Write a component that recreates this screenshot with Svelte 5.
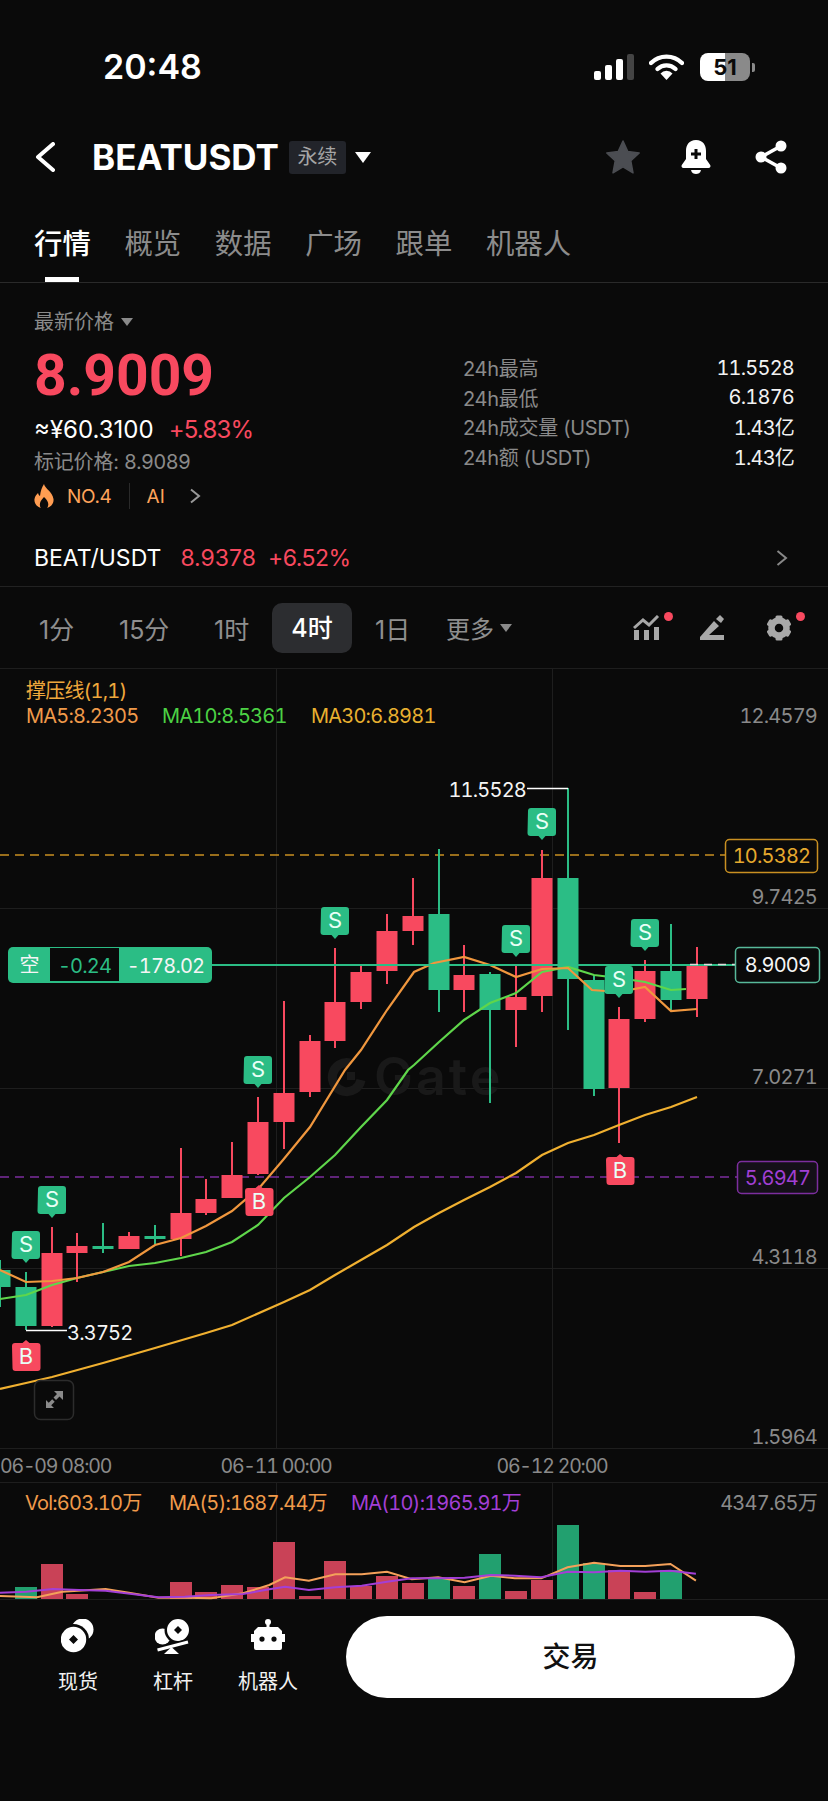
<script>
  const RED = '#f8495f';
  const GREEN = '#2bbd85';
  // x, bodyTop, bodyBottom, wickTop, wickBottom, up?
  const candles = [
    [0,1270,1287,1260,1307,0],[26,1287,1326,1272,1330,0],[52,1253,1326,1227,1327,1],[77,1246,1253,1233,1282,1],
    [103,1246,1249,1223,1253,0],[129,1236,1249,1232,1249,1],[155,1236,1239,1225,1244,0],[181,1213,1239,1148,1256,1],
    [206,1199,1213,1179,1215,1],[232,1175,1198,1142,1198,1],[258,1122,1174,1097,1175,1],[284,1093,1122,1001,1149,1],
    [310,1041,1092,1035,1097,1],[335,1002,1041,948,1048,1],[361,972,1002,965,1009,1],[387,931,971,914,984,1],
    [413,916,931,878,945,1],[439,914,990,849,1012,0],[464,975,990,945,1012,1],[490,974,1010,972,1103,0],
    [516,997,1010,965,1047,1],[542,878,996,850,1012,1],[568,878,979,788,1030,0],[594,980,1089,975,1096,0],
    [619,1019,1088,1007,1143,1],[645,971,1019,960,1022,1],[671,971,1000,924,1010,0],[697,966,999,947,1017,1]
  ].map(([x, t, b, wt, wb, up]) => ({ x, t, b, wt, wb, color: up ? RED : GREEN }));

  const pts = (a) => a.map((p) => p.join(',')).join(' ');
  const ma5 = pts([[0,1270],[26,1282],[52,1281],[77,1278],[103,1272],[129,1262],[155,1245],[181,1238],[206,1226],[232,1211],[260,1187],[283,1160],[310,1127],[345,1070],[361,1050],[387,1010],[414,972],[434,963],[464,957],[490,965],[516,977],[542,969],[568,968],[592,990],[619,992],[645,987],[671,1011],[697,1009]]);
  const ma10 = pts([[0,1299],[26,1295],[52,1285],[77,1278],[103,1272],[129,1266],[155,1263],[181,1258],[206,1252],[232,1242],[258,1225],[284,1198],[310,1177],[335,1155],[361,1127],[387,1100],[408,1070],[414,1065],[439,1042],[464,1020],[490,1003],[516,993],[542,972],[568,967],[594,975],[619,978],[645,982],[671,990],[686,989]]);
  const ma30 = pts([[0,1389],[26,1383],[52,1377],[103,1363],[155,1348],[206,1333],[232,1325],[284,1302],[310,1290],[335,1275],[361,1260],[387,1245],[414,1227],[439,1213],[464,1200],[490,1187],[516,1173],[542,1155],[568,1143],[594,1135],[619,1125],[645,1115],[671,1107],[697,1097]]);

  const vols = [[26,1587,0],[52,1564,1],[77,1594,1],[181,1582,1],[206,1592,1],[232,1585,1],[258,1587,1],[284,1542,1],[310,1596,1],[335,1561,1],[361,1586,1],[387,1576,1],[413,1583,1],[439,1578,0],[464,1586,1],[490,1554,0],[516,1591,1],[542,1580,1],[568,1525,0],[594,1563,0],[619,1570,1],[645,1592,1],[671,1570,0]];
  const zoomPts = (a) => a.map(([u, v]) => `${(u / 1.894).toFixed(1)},${(1470 + v / 3).toFixed(1)}`).join(' ');
  const volOrange = zoomPts([[0,378],[70,382],[118,365],[200,357],[250,370],[300,383],[350,383],[400,385],[460,370],[510,345],[540,322],[585,332],[635,313],[685,313],[733,305],[780,328],[830,322],[880,337],[930,317],[975,325],[1025,325],[1075,292],[1125,278],[1175,288],[1222,288],[1270,282],[1318,332]]);
  const volPurple = zoomPts([[0,368],[50,365],[100,357],[150,360],[200,362],[250,372],[300,382],[350,380],[400,375],[460,372],[510,358],[540,350],[585,360],[635,352],[685,347],[733,335],[780,325],[830,325],[880,323],[930,315],[975,317],[1025,322],[1075,305],[1125,307],[1175,302],[1222,305],[1270,302],[1318,311]]);

  const sells = [[335,907],[258,1056],[542,808],[516,925],[645,919],[619,966],[52,1186],[26,1231]];
  const buys = [[26,1343],[259,1188],[620,1157]];
  const axis = [['12.4579',716],['9.7425',897],['7.0271',1077],['4.3118',1257],['1.5964',1437]];
  const tabs = ['行情','概览','数据','广场','跟单','机器人'];
  const stats = [['24h最高','11.5528'],['24h最低','6.1876'],['24h成交量 (USDT)','1.43亿'],['24h额 (USDT)','1.43亿']];
  const periods = ['1分','15分','1时','4时','1日'];
  const teeth = [0, 60, 120, 180, 240, 300];
</script>

<div class="page">
  <div class="status">
    <span class="clock">20:48</span>
    <div class="status-icons">
      <svg width="40" height="26" viewBox="0 0 40 26">
        <rect x="0" y="17" width="7" height="9" rx="2" fill="#fff"/>
        <rect x="11" y="11" width="7" height="15" rx="2" fill="#fff"/>
        <rect x="22" y="5" width="7" height="21" rx="2" fill="#fff"/>
        <rect x="33" y="0" width="7" height="26" rx="2" fill="#444"/>
      </svg>
      <svg width="35" height="26" viewBox="0 0 35 26">
        <path d="M2 9 A22 22 0 0 1 33 9" fill="none" stroke="#fff" stroke-width="4.4" stroke-linecap="round"/>
        <path d="M8.5 15 A13 13 0 0 1 26.5 15" fill="none" stroke="#fff" stroke-width="4.4" stroke-linecap="round"/>
        <path d="M11.5 19.5 L17.5 26 L23.5 19.5 A8 8 0 0 0 11.5 19.5 Z" fill="#fff"/>
      </svg>
      <div class="battery"><span>51</span></div>
      <div class="battery-cap"></div>
    </div>
  </div>

  <div class="nav">
    <svg class="back" width="20" height="30" viewBox="0 0 20 30"><path d="M18 2 L3 15 L18 28" fill="none" stroke="#fff" stroke-width="4" stroke-linecap="round" stroke-linejoin="round"/></svg>
    <span class="symbol">BEATUSDT</span>
    <span class="tag">永续</span>
    <span class="caret white"></span>
    <div class="nav-icons">
      <svg width="34" height="34" viewBox="0 0 34 34"><path d="M17 1 L21.8 11.6 L33.2 13 L24.8 20.8 L27 32.8 L17 26.8 L7 32.8 L9.2 20.8 L0.8 13 L12.2 11.6 Z" fill="#4b4d52" stroke="#4b4d52" stroke-width="1.5" stroke-linejoin="round"/></svg>
      <svg width="30" height="34" viewBox="0 0 30 34"><path d="M15 0 C8 0 5 5 5 11 L5 19 L0.8 25 C0 26.5 .8 28 2.5 28 L27.5 28 C29.2 28 30 26.5 29.2 25 L25 19 L25 11 C25 5 22 0 15 0 Z" fill="#fff"/><path d="M10 30 L20 30 C19.5 33 17 34 15 34 C13 34 10.5 33 10 30 Z" fill="#fff"/><path d="M15 9 V19 M10 14 H20" stroke="#0a0a0a" stroke-width="3"/></svg>
      <svg width="32" height="34" viewBox="0 0 32 34"><path d="M26 6 L6 17 L26 28" fill="none" stroke="#fff" stroke-width="3.6"/><circle cx="26" cy="6" r="5.5" fill="#fff"/><circle cx="6" cy="17" r="5.5" fill="#fff"/><circle cx="26" cy="28" r="5.5" fill="#fff"/></svg>
    </div>
  </div>

  <div class="tabs">
    {#each tabs as t, i}
      <span class="tab" class:active={i === 0}>{t}</span>
    {/each}
  </div>

  <div class="summary">
    <div class="left">
      <div class="latest">最新价格 <span class="caret gray small"></span></div>
      <div class="price">8.9009</div>
      <div class="fiat"><span>≈¥60.3100</span><span class="red change">+5.83%</span></div>
      <div class="mark">标记价格: 8.9089</div>
      <div class="rank">
        <svg width="20" height="24" viewBox="0 0 20 24"><path d="M10 0 C11 4.500 18.500 8 19.500 15 C20.200 20 16 23.500 13.200 24 C15 21 15 17.500 10 13 C5.500 17.500 5 21 6.800 24 C4 23.500 -0.200 20 0.500 15 C1 12 2.500 10.500 4 9 C4.500 10.500 5 11.500 6 12 C6.500 7 8 3 10 0 Z" fill="#ff9d52"/></svg>
        <span class="no">NO.4</span><i></i><span class="ai">AI</span>
        <svg class="mini-chev" width="12" height="16" viewBox="0 0 12 16"><path d="M2 1.500 L10 8 L2 14.500" fill="none" stroke="#999" stroke-width="2"/></svg>
      </div>
    </div>
    <div class="right">
      {#each stats as [k, v]}
        <div class="stat"><span>{k}</span><b>{v}</b></div>
      {/each}
    </div>
  </div>

  <div class="spot">
    <span class="pair">BEAT/USDT</span>
    <span class="red last">8.9378</span>
    <span class="red pct">+6.52%</span>
    <svg class="spot-chev" width="12" height="16" viewBox="0 0 12 16"><path d="M1.500 1 L10 8 L1.500 15" fill="none" stroke="#888" stroke-width="2"/></svg>
  </div>

  <div class="periods">
    {#each periods as p, i}
      <span class="period p{i}" class:on={i === 3}>{p}</span>
    {/each}
    <span class="more">更多</span>
    <span class="caret gray small"></span>
    <div class="tools">
      <div class="tool">
        <svg width="27" height="25" viewBox="0 0 27 25"><path d="M1 13 L10 5 L16 10 L25 1" fill="none" stroke="#a8a8a8" stroke-width="3"/><rect x="1" y="15" width="5" height="10" fill="#a8a8a8"/><rect x="11" y="15" width="5" height="10" fill="#a8a8a8"/><rect x="21" y="12" width="5" height="13" fill="#a8a8a8"/></svg>
        <b></b>
      </div>
      <div class="tool">
        <svg width="25" height="25" viewBox="0 0 25 25"><path d="M0 22 L14 6 L19 11 L9 20 H24 V25 H0 Z M16 4 L20 0 L24 4 L21 8 Z" fill="#a8a8a8"/></svg>
      </div>
      <div class="tool">
        <svg width="24" height="26" viewBox="0 0 24 26">
          <circle cx="12" cy="13" r="7.500" fill="none" stroke="#a8a8a8" stroke-width="6.500"/>
          {#each teeth as a}
            <rect x="8.500" y="0.500" width="7" height="5" rx="1.500" fill="#a8a8a8" transform="rotate({a} 12 13)"/>
          {/each}
        </svg>
        <b class="gear"></b>
      </div>
    </div>
  </div>

  <svg class="chart" width="828" height="932" viewBox="0 668 828 932">
    <!-- grid -->
    {#each [668, 908, 1088, 1268, 1448, 1482, 1599] as y}
      <line x1="0" x2="828" y1={y + .5} y2={y + .5} stroke="#1e1e1e"/>
    {/each}
    {#each [276, 552] as x}
      <line x1={x + .5} x2={x + .5} y1="668" y2="1448" stroke="#1e1e1e"/>
      <line x1={x + .5} x2={x + .5} y1="1482" y2="1599" stroke="#1e1e1e"/>
    {/each}

    <!-- watermark -->
    <path d="M350 1063 A14.500 14.500 0 1 0 361 1080" fill="none" stroke="#191919" stroke-width="9"/>
    <rect x="347" y="1072" width="8" height="8" fill="#191919"/>
    <text class="watermark" x="374" y="1095">Gate</text>

    <!-- alert lines -->
    <line x1="0" x2="725" y1="855" y2="855" stroke="#c99022" stroke-width="1.500" stroke-dasharray="9 6"/>
    <line x1="0" x2="737" y1="1177" y2="1177" stroke="#7c2e9e" stroke-width="1.500" stroke-dasharray="9 6"/>

    <!-- candles -->
    {#each candles as c}
      <rect x={c.x - 1} y={c.wt} width="2" height={c.wb - c.wt} fill={c.color}/>
      <rect x={c.x - 10.500} y={c.t} width="21" height={c.b - c.t} fill={c.color}/>
    {/each}

    <!-- moving averages -->
    <polyline points={ma30} fill="none" stroke="#f0b030" stroke-width="2.200"/>
    <polyline points={ma10} fill="none" stroke="#5fd64b" stroke-width="2.200"/>
    <polyline points={ma5} fill="none" stroke="#f0973e" stroke-width="2.200"/>

    <!-- open position -->
    <line x1="212" x2="736" y1="965" y2="965" stroke={GREEN} stroke-width="2"/>
    <line x1="690" x2="735" y1="964.500" y2="964.500" stroke="#ddd" stroke-width="1.500" stroke-dasharray="8 6"/>
    <rect x="8" y="947" width="204" height="36" rx="5" fill={GREEN}/>
    <rect x="50" y="948" width="69" height="33" fill="#0a0a0a"/>
    <text class="t w cjk" x="29" y="972" text-anchor="middle">空</text>
    <text class="t" x="84.500" y="973" text-anchor="middle" fill={GREEN}>-0.24</text>
    <text class="t w" x="165.500" y="973" text-anchor="middle">-178.02</text>

    <!-- high / low -->
    <path d="M527 788.500 H568" stroke="#fff" stroke-width="1.500" fill="none"/>
    <text class="t w" x="526" y="796.500" text-anchor="end">11.5528</text>
    <path d="M26 1330.500 H67" stroke="#fff" stroke-width="1.500" fill="none"/>
    <text class="t w" x="67" y="1339.500">3.3752</text>

    <!-- markers -->
    {#each sells as [x, y]}
      <path d="M{x - 14} {y + 3} a3 3 0 0 1 3 -3 h22 a3 3 0 0 1 3 3 v22 a3 3 0 0 1 -3 3 h-7.500 l-3.500 4 l-3.500 -4 h-8 a3 3 0 0 1 -3 -3 Z" fill={GREEN}/>
      <text class="t marker" x={x} y={y + 21} text-anchor="middle">S</text>
    {/each}
    {#each buys as [x, y]}
      <path d="M{x - 14} {y + 3} a3 3 0 0 1 3 -3 h7.500 l3.500 -3 l3.500 3 h8 a3 3 0 0 1 3 3 v22 a3 3 0 0 1 -3 3 h-22 a3 3 0 0 1 -3 -3 Z" fill={RED}/>
      <text class="t marker" x={x} y={y + 21} text-anchor="middle">B</text>
    {/each}

    <!-- legends -->
    <text class="t cjk" x="26" y="698" fill="#efa83c">撑压线(1,1)</text>
    <text class="t" x="26" y="723" fill="#f09a4a">MA5:8.2305</text>
    <text class="t" x="162" y="723" fill="#4cd244">MA10:8.5361</text>
    <text class="t" x="311" y="723" fill="#e8b030">MA30:6.8981</text>

    <!-- axis -->
    {#each axis as [v, y]}
      <text class="t g" x="817" y={y + 7} text-anchor="end">{v}</text>
    {/each}
    <rect x="725.500" y="839.500" width="92" height="33" rx="4" fill="#0a0a0a" stroke="#c99022" stroke-width="1.500"/>
    <text class="t" x="771.500" y="863" text-anchor="middle" fill="#e6a92e">10.5382</text>
    <rect x="737.500" y="1161.500" width="80" height="32" rx="4" fill="#141018" stroke="#7c2e9e" stroke-width="1.500"/>
    <text class="t" x="777.500" y="1184.500" text-anchor="middle" fill="#a13fd4">5.6947</text>
    <rect x="735.500" y="947.500" width="84" height="35" rx="4" fill="#0a0a0a" stroke="#57b99a" stroke-width="1.500"/>
    <text class="t w" x="777.500" y="972" text-anchor="middle">8.9009</text>

    <!-- fullscreen -->
    <rect x="34.500" y="1380.500" width="39" height="39" rx="6" fill="#0a0a0a" stroke="#2c2c2c" stroke-width="1.500"/>
    <path d="M46 1408 h8 l-2.800 -2.800 l3.500 -3.500 l-2.500 -2.500 l-3.500 3.500 l-2.700 -2.700 Z M63 1391 h-9 l3 3 l-3.500 3.500 l2.500 2.500 l3.500 -3.500 l3.500 3.500 Z" fill="#8a8a8a"/>

    <!-- time axis -->
    <text class="t g time" x="0" y="1473">06-09 08:00</text>
    <text class="t g time" x="276" y="1473" text-anchor="middle">06-11 00:00</text>
    <text class="t g time" x="552" y="1473" text-anchor="middle">06-12 20:00</text>

    <!-- volume -->
    {#each vols as [x, y, up]}
      <rect x={x - 11} y={y} width="22" height={1599 - y} fill={up ? '#c94257' : '#22a06f'}/>
    {/each}
    <polyline points={volOrange} fill="none" stroke="#f4a15a" stroke-width="2"/>
    <polyline points={volPurple} fill="none" stroke="#a33fd6" stroke-width="2"/>
    <text class="t cjk" x="25" y="1510" fill="#f09a4a">Vol:603.10万</text>
    <text class="t cjk" x="169" y="1510" fill="#f09a4a">MA(5):1687.44万</text>
    <text class="t cjk" x="351" y="1510" fill="#a33fd6">MA(10):1965.91万</text>
    <text class="t g cjk" x="817" y="1510" text-anchor="end">4347.65万</text>
  </svg>

  <div class="bottom">
    <div class="shortcut s1">
      <svg width="34" height="35" viewBox="0 0 34 35">
        <circle cx="21.500" cy="10.500" r="11" fill="#fff"/>
        <circle cx="12.500" cy="20.500" r="15.500" fill="#0a0a0a"/>
        <path fill-rule="evenodd" d="M12.500 7.800 A12.700 12.700 0 1 0 12.500 33.200 A12.700 12.700 0 1 0 12.500 7.800 Z M12.500 16 L17 20.500 L12.500 25 L8 20.500 Z" fill="#fff"/>
      </svg>
      <span>现货</span>
    </div>
    <div class="shortcut s2">
      <svg width="36" height="35" viewBox="0 0 36 35">
        <circle cx="7.500" cy="17.500" r="8" fill="#fff"/>
        <circle cx="23" cy="11" r="13.500" fill="#0a0a0a"/>
        <path fill-rule="evenodd" d="M23 0 A11 11 0 1 0 23 22 A11 11 0 1 0 23 0 Z M23 7 L27 11 L23 15 L19 11 Z" fill="#fff"/>
        <path d="M2.500 31 L33 23" stroke="#0a0a0a" stroke-width="6"/>
        <path d="M2.500 31 L33 23" stroke="#fff" stroke-width="3"/>
        <path d="M16.500 28 L9 35 H24 Z" fill="#fff"/>
      </svg>
      <span>杠杆</span>
    </div>
    <div class="shortcut s3">
      <svg width="34" height="35" viewBox="0 0 34 35">
        <circle cx="17" cy="3" r="3" fill="#fff"/>
        <rect x="15.500" y="4" width="3" height="5" fill="#fff"/>
        <path fill-rule="evenodd" d="M7 8 H27 L31 12 V15 H34 V23 H31 V29 Q31 31 29 31 H5 Q3 31 3 29 V23 H0 V15 H3 V12 Z M11 17.500 A2.600 2.600 0 1 0 11 22.700 A2.600 2.600 0 1 0 11 17.500 Z M23 17.500 A2.600 2.600 0 1 0 23 22.700 A2.600 2.600 0 1 0 23 17.500 Z" fill="#fff"/>
      </svg>
      <span>机器人</span>
    </div>
    <div class="trade">交易</div>
  </div>
</div>

<style>
  :global(body) { background: #0a0a0a; }
  .page {
    width: 828px;
    height: 1801px;
    overflow: hidden;
    background: #0a0a0a;
    color: #fff;
    font-family: Inter, "Noto Sans CJK SC", sans-serif;
  }
  .red { color: #f8495f; }

  .status {
    height: 54px;
    margin-top: 40px;
    padding: 0 73px 0 103px;
    display: flex;
    align-items: center;
    justify-content: space-between;
  }
  .clock { font-size: 34px; font-weight: 600; line-height: 1; }
  .status-icons { display: flex; align-items: center; }
  .status-icons svg:first-child { margin-right: 15px; }
  .battery {
    width: 50px;
    height: 28px;
    margin-left: 16px;
    border-radius: 8px;
    background: linear-gradient(to right, #fff 50%, #8a8a8a 50%);
    display: flex;
    align-items: center;
    justify-content: center;
    color: #0a0a0a;
    font: 700 22px/1 Inter, sans-serif;
  }
  .battery-cap { width: 3px; height: 9px; margin-left: 2px; background: #8a8a8a; border-radius: 0 2px 2px 0; }

  .nav {
    height: 126px;
    padding: 0 41px 0 35px;
    display: flex;
    align-items: center;
    box-sizing: border-box;
  }
  .back { margin-right: 37px; }
  .symbol { font-size: 35px; font-weight: 700; }
  .tag {
    margin-left: 10px;
    width: 57px;
    height: 33px;
    border-radius: 3px;
    background: #22242a;
    color: #a5a5a5;
    font-size: 20px;
    line-height: 33px;
    text-align: center;
  }
  .caret {
    display: inline-block;
    width: 0;
    height: 0;
    border-left: 8px solid transparent;
    border-right: 8px solid transparent;
    border-top: 11px solid #fff;
  }
  .caret.white { margin-left: 9px; }
  .caret.gray { border-top-color: #8a8a8a; }
  .caret.small { border-left-width: 6px; border-right-width: 6px; border-top-width: 8px; }
  .nav-icons { margin-left: auto; display: flex; align-items: center; }
  .nav-icons svg:nth-child(2) { margin: 0 44px 0 41px; }

  .tabs {
    height: 63px;
    box-sizing: border-box;
    padding: 7px 34px 0;
    display: flex;
    gap: 33.600px;
    border-bottom: 1px solid #2a2a2a;
    font-size: 28.400px;
    color: #8c8c8c;
  }
  .tab { position: relative; height: 34px; line-height: 34px; }
  .tab.active { color: #fff; font-weight: 500; }
  .tab.active::after {
    content: "";
    position: absolute;
    left: 11px;
    width: 34px;
    top: 50px;
    height: 5px;
    background: #fff;
  }

  .summary {
    height: 243px;
    padding: 0 34px;
    display: flex;
    justify-content: space-between;
  }
  .left { width: 429px; }
  .latest {
    margin-top: 25px;
    height: 28px;
    line-height: 28px;
    font-size: 20px;
    color: #8a8a8a;
    display: flex;
    align-items: center;
    gap: 7px;
  }
  .price {
    margin-top: 13px;
    font-family: Roboto, sans-serif;
    font-size: 57px;
    line-height: 54px;
    font-weight: 700;
    color: #f8495f;
  }
  .fiat { margin-top: 12px; display: flex; gap: 15px; font-size: 24px; line-height: 30px; }
  .change { letter-spacing: -0.8px; }
  .mark { margin-top: 2px; font-size: 20px; line-height: 30px; color: #8a8a8a; letter-spacing: -0.2px; }
  .rank { margin-top: 1px; display: flex; align-items: center; font-size: 19px; color: #ffa35a; height: 36px; }
  .no { margin-left: 13px; letter-spacing: -0.3px; }
  .rank i { width: 1px; height: 26px; background: #2a2a2a; margin-left: 17px; }
  .ai { margin-left: 17px; }
  .mini-chev { margin-left: 24px; }
  .right { flex: 1; padding-top: 70px; }
  .stat {
    height: 29.500px;
    display: flex;
    justify-content: space-between;
    align-items: center;
    font-size: 20px;
    color: #8a8a8a;
    letter-spacing: -0.3px;
  }
  .stat b { font-weight: 400; color: #f2f2f2; font-feature-settings: "tnum"; letter-spacing: -0.8px; }

  .spot {
    height: 61px;
    box-sizing: border-box;
    padding: 4px 40px 0 34px;
    display: flex;
    align-items: center;
    font-size: 23px;
    border-bottom: 1px solid #222;
  }
  .last { margin-left: 19px; }
  .pct { margin-left: 12px; letter-spacing: -0.5px; }
  .spot-chev { margin-left: auto; }

  .periods {
    height: 81px;
    box-sizing: border-box;
    display: flex;
    align-items: center;
    font-size: 24px;
    color: #8f8f8f;
    padding: 0 34px 0 39px;
  }
  .period { white-space: nowrap; font-size: 25px; }
  .p0 { width: 80px; }
  .p1 { width: 82px; margin-right: 13px; }
  .p2 { width: 58px; }
  .p3 { width: 80px; height: 50px; line-height: 50px; border-radius: 10px; background: #2c2d30; text-align: center; font-weight: 500; color: #fff; }
  .p4 { width: 71px; margin-left: 23px; }
  .more { margin-right: 6px; }
  .tools { margin-left: auto; display: flex; gap: 40px; }
  .tool { position: relative; width: 27px; height: 25px; }
  .tool b {
    position: absolute;
    top: -3px;
    left: 31px;
    width: 9px;
    height: 9px;
    border-radius: 50%;
    background: #f8495f;
  }
  .tool b.gear { left: 29px; }

  .chart { display: block; }
  .t { font-family: Inter, "Noto Sans CJK SC", sans-serif; font-size: 20px; font-feature-settings: "tnum"; letter-spacing: -0.8px; }
  .w { fill: #f5f5f5; }
  .g { fill: #8a8a8a; }
  .time { font-size: 19.500px; letter-spacing: -1.200px; }
  .marker { fill: #e9fff6; font-size: 22px; letter-spacing: 0; }
  .watermark { font-family: Inter, sans-serif; font-size: 52px; font-weight: 600; fill: #191919; letter-spacing: 3px; }

  .bottom { position: relative; height: 201px; display: flex; }
  .shortcut {
    position: absolute;
    top: 19px;
    width: 70px;
    display: flex;
    flex-direction: column;
    align-items: center;
    font-size: 20px;
    color: #f2f2f2;
  }
  .shortcut span { margin-top: 14px; white-space: nowrap; line-height: 28px; }
  .s1 { left: 43px; }
  .s2 { left: 138px; }
  .s3 { left: 233px; }
  .trade {
    position: absolute;
    left: 346px;
    top: 16px;
    width: 449px;
    height: 82px;
    border-radius: 41px;
    background: #fff;
    color: #111;
    font-size: 28px;
    font-weight: 500;
    line-height: 82px;
    text-align: center;
  }
</style>
